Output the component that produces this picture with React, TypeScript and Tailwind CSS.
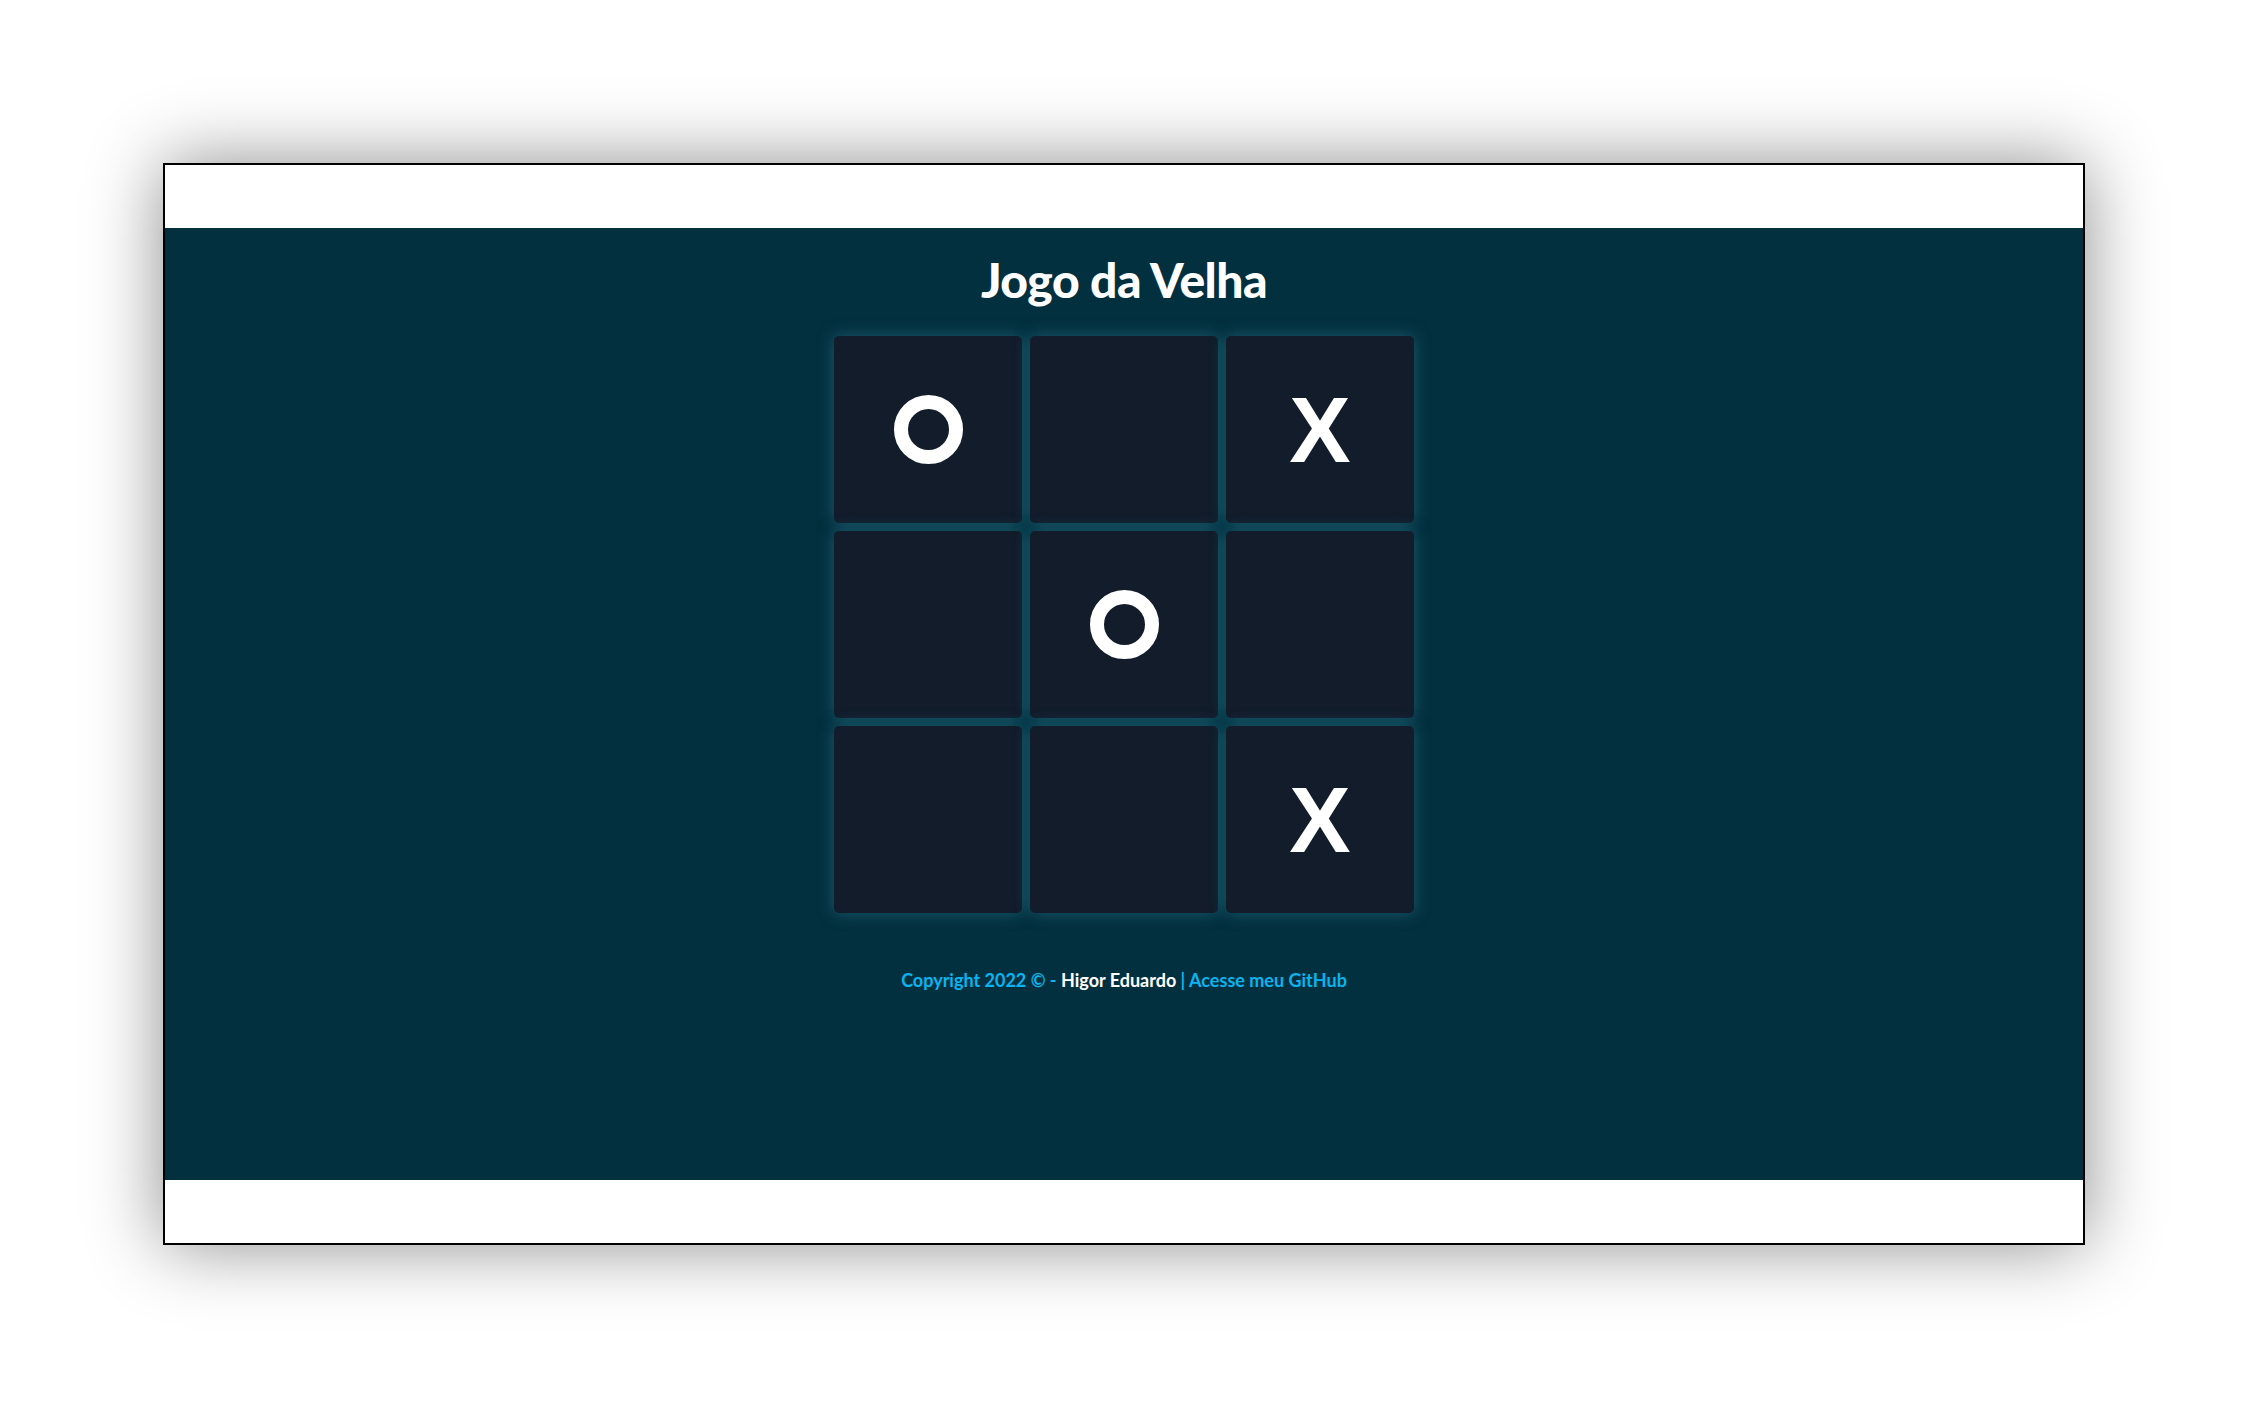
import React from "react";

const board: ("X" | "O" | "")[] = ["O", "", "X", "", "O", "", "", "", "X"];

function Cell({ v }: { v: "X" | "O" | "" }) {
  return (
    <div className="w-[188px] h-[187px] rounded-[5px] bg-[#121c2b] shadow-[0_0_16px_rgba(45,120,140,0.6)] flex items-center justify-center">
      {v === "O" && (
        <span
          role="img"
          aria-label="O"
          className="block w-[69px] h-[69px] rounded-full border-[14px] border-white"
        />
      )}
      {v === "X" && (
        <span className="text-white text-[92px] leading-none font-bold [font-family:'Liberation_Sans',Arial,sans-serif]">
          X
        </span>
      )}
    </div>
  );
}

export default function App() {
  return (
    <div className="min-h-[1408px] w-full bg-white pt-[163px] pl-[163px]">
      <div className="w-[1922px] h-[1082px] border-2 border-black bg-white shadow-[0_0_70px_rgba(0,0,0,0.45)] flex flex-col">
        <div className="h-[63px] bg-white" />
        <div className="h-[952px] bg-[#03303f] flex flex-col items-center [font-family:Lato,'Noto_Sans',sans-serif]">
          <h1 className="mt-[28px] text-white text-[48px] leading-none font-black tracking-[-0.5px]">
            Jogo da Velha
          </h1>
          <div className="mt-[32px] grid grid-cols-3 gap-x-2 gap-y-2">
            {board.map((v, i) => (
              <Cell key={i} v={v} />
            ))}
          </div>
          <p className="mt-[54px] text-[18px] font-bold text-[#0ab4ee]">
            Copyright 2022 © - <span className="text-white">Higor Eduardo</span> |{" "}
            <a className="text-[#0ab4ee]">Acesse meu GitHub</a>
          </p>
        </div>
        <div className="flex-1 bg-white" />
      </div>
    </div>
  );
}
